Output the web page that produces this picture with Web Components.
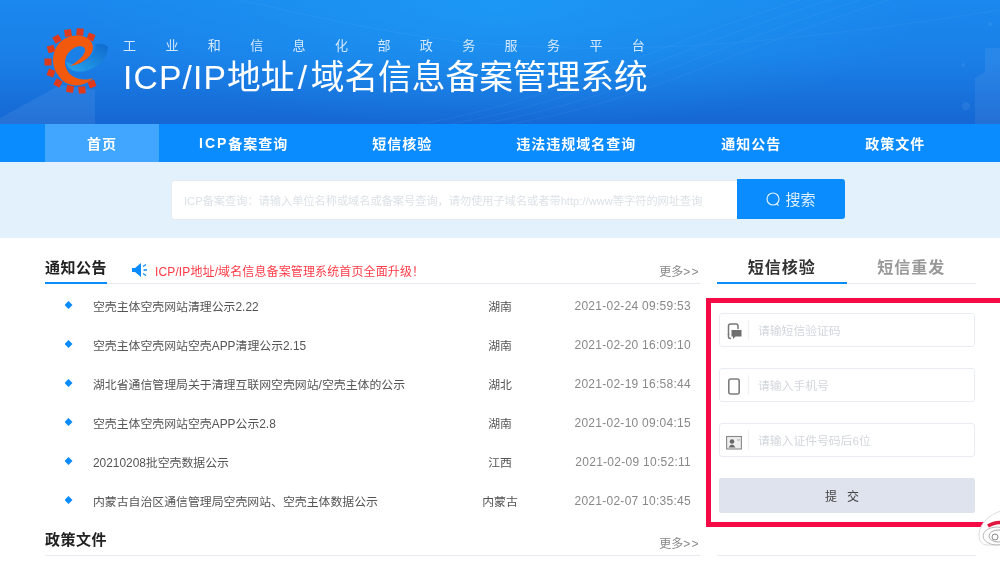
<!DOCTYPE html>
<html lang="zh-CN"><head><meta charset="utf-8"><title>ICP/IP地址/域名信息备案管理系统</title>
<style>
html,body{margin:0;padding:0;background:#fff;overflow:hidden}
body{width:1000px;height:562px;font-family:"Liberation Sans","Noto Sans CJK SC",sans-serif;position:relative;filter:blur(.3px)}
main-columns{margin-top:17px}
.ls2{letter-spacing:2px}
</style></head><body>
<site-header></site-header>
<site-nav><nav-item active>首页</nav-item><nav-item style="padding-left:40px"><span class="ls2">ICP</span>备案查询</nav-item><nav-item>短信核验</nav-item><nav-item style="padding-right:43px">违法违规域名查询</nav-item><nav-item>通知公告</nav-item><nav-item>政策文件</nav-item></site-nav>
<search-band></search-band>
<main-columns>
  <div slot="left">
    <section-head title="通知公告"></section-head>
    <notice-list>
      <notice-row t="空壳主体空壳网站清理公示2.22" p="湖南" d="2021-02-24 09:59:53"></notice-row>
      <notice-row t="空壳主体空壳网站空壳APP清理公示2.15" p="湖南" d="2021-02-20 16:09:10"></notice-row>
      <notice-row t="湖北省通信管理局关于清理互联网空壳网站/空壳主体的公示" p="湖北" d="2021-02-19 16:58:44"></notice-row>
      <notice-row t="空壳主体空壳网站空壳APP公示2.8" p="湖南" d="2021-02-10 09:04:15"></notice-row>
      <notice-row t="20210208批空壳数据公示" p="江西" d="2021-02-09 10:52:11"></notice-row>
      <notice-row t="内蒙古自治区通信管理局空壳网站、空壳主体数据公示" p="内蒙古" d="2021-02-07 10:35:45"></notice-row>
    </notice-list>
    <section-head title="政策文件" plain></section-head>
  </div>
  <sms-panel slot="right"></sms-panel>
</main-columns>
<weibo-badge></weibo-badge>
<script>
const def=(name,html)=>customElements.define(name,class extends HTMLElement{
  constructor(){super();this.attachShadow({mode:'open'});if(typeof html!=='function')this.shadowRoot.innerHTML=html}
  connectedCallback(){if(typeof html==='function')this.shadowRoot.innerHTML=html(this)}
});
const squares=[[68,33,-8],[80,32,5],[91,37,20],[57,39,-30],[51,49,-15],[48,62,0],[51,73,20],[58,83,30],[70,89,10],[82,90,-5],[92,84,-20]]
 .map(([x,y,r])=>`<rect x="${x-3.5}" y="${y-3.5}" width="7" height="7" fill="#e03a1c" transform="rotate(${r} ${x} ${y})"/>`).join('');
def('site-header',`<style>
:host{display:block;height:124px;position:relative;overflow:hidden;color:#fff;
 background:radial-gradient(ellipse 420px 120px at 500px 10px,rgba(30,165,250,.55),rgba(30,165,250,0)),linear-gradient(180deg,#1a88ee 0%,#1a80e8 45%,#1667d3 100%)}
.bg{position:absolute;left:0;top:0}
.row{position:relative;display:flex;align-items:flex-start;padding:25px 0 0 40px}
.logo{display:block;width:70px;height:70px;flex:none}
.txt{margin-left:13px;padding-top:12px}
.sub{font-size:13px;line-height:18px;letter-spacing:29.4px;white-space:nowrap;color:#d5e8fb}
.ttl{font-size:33.7px;line-height:42px;margin-top:1px;white-space:nowrap;color:#fff}
.ttl b{font-weight:400;letter-spacing:1.1px}
.ttl u{text-decoration:none;padding:0 3.5px}
</style>
<svg class="bg" width="1000" height="124" viewBox="0 0 1000 124" fill="none">
<path d="M0 124 L0 118 L60 85 L95 90 L95 124Z" fill="#fff" opacity=".07"/>
<g stroke="#fff" opacity=".04"><path d="M240 0C420 40 560 80 1000 10"/><path d="M420 124C560 100 640 50 800 0"/><path d="M450 124C590 100 670 50 830 0"/><path d="M480 124C620 100 700 50 860 0"/><path d="M510 124C650 100 730 50 890 0"/></g>
<g fill="#fff" opacity=".06"><path d="M975 78L985 72V48H1000V124H975Z"/><circle cx="966" cy="106" r="4"/><circle cx="963" cy="65" r="2"/><circle cx="990" cy="24" r="2"/></g>
</svg>
<div class="row">
<svg class="logo" viewBox="40 25 70 70" aria-hidden="true">
<defs><linearGradient id="b" x1="0" y1="1" x2="1" y2="0"><stop offset="0" stop-color="#27a6ee"/><stop offset="1" stop-color="#0f69cc"/></linearGradient></defs>
${squares}
<path d="M66 61C67 72 80 74 91 69C101 65 108 57 108 47C106 44 100 43 95 44C97 52 90 60 82 63C76 65 70 65 66 61Z" fill="url(#b)"/>
<path d="M93 78C85 87 70 88 62 80C53 71 51 60 55 50C60 38 72 34 82 36C91 38 96 46 91 54C86 61 78 65 70 66C77 62 84 56 85 51C86 46 79 45 74 48C67 52 63 60 66 68C70 78 82 82 93 78Z" fill="#f2590c"/>
</svg>
<div class="txt"><div class="sub">工业和信息化部政务服务平台</div><div class="ttl"><b>ICP/IP</b>地址<u>/</u>域名信息备案管理系统</div></div>
</div>`);
def('site-nav',`<style>:host{display:flex;height:38px;background:#0a8bfe;padding-left:45px}</style><slot></slot>`);
def('nav-item',`<style>:host{display:flex;align-items:center;padding:0 42px;color:#fff;font-size:14px;font-weight:700;letter-spacing:1px;white-space:nowrap}
:host([active]){background:#40a6ff}</style><slot></slot>`);
def('search-band',`<style>:host{display:flex;height:76px;background:#e3f1fd;padding:17px 0 0 171px;box-sizing:border-box}
.in{width:566px;height:40px;box-sizing:border-box;background:#fff;border:1px solid #e6ebf1;border-right:0;border-radius:3px 0 0 3px;margin-top:1px;padding-left:12px;display:flex;align-items:center;font-size:11.2px;color:#dde1e7;white-space:nowrap;overflow:hidden}
.btn{width:108px;height:40px;background:#0a8bfe;border-radius:0 3px 3px 0;color:#dcefff;display:flex;align-items:center;justify-content:center;gap:4px;font-size:15px;padding-right:1px;box-sizing:border-box}
svg{display:block}
span{margin-top:-1px}
</style><div class="in">ICP备案查询：请输入单位名称或域名或备案号查询，请勿使用子域名或者带http://www等字符的网址查询</div>
<div class="btn"><svg width="16" height="16" viewBox="0 0 16 16" fill="none" stroke="#dcefff" stroke-width="1.2"><circle cx="8" cy="8" r="6"/><path d="M11.5 12.5L13.5 14.5"/></svg><span>搜索</span></div>`);
def('main-columns',`<style>:host{display:block}
.w{display:flex;padding-left:45px}
.l{width:655px;flex:none}.r{margin-left:17px;width:259px;flex:none}
</style><div class="w"><div class="l"><slot name="left"></slot></div><div class="r"><slot name="right"></slot></div></div>`);
def('section-head',h=>`<style>:host{display:flex;align-items:flex-end;height:28px;border-bottom:1px solid #e7eaee;position:relative}
.t{font-size:15px;font-weight:700;letter-spacing:.5px;color:#222;height:28px;line-height:23px;box-sizing:border-box;border-bottom:2px solid #0a8bfe;margin-bottom:-1px;white-space:nowrap}
:host([plain]) .t{border-bottom:0;margin-bottom:0;line-height:25px}
.n{display:flex;align-items:center;height:30px;margin-left:25px;color:#ff3b47;font-size:12px;letter-spacing:.12px;white-space:nowrap;gap:7px;align-self:flex-start}
.m{margin-left:auto;font-size:12px;color:#888;white-space:nowrap;align-self:flex-start;line-height:34px}
.m i{font-style:normal;letter-spacing:1.4px}
:host([plain]) .m{line-height:34px}
svg{display:block}
</style><div class="t">${h.getAttribute('title')}</div>
${h.hasAttribute('plain')?'':`<div class="n"><svg width="16" height="14" viewBox="0 0 16 14" fill="#0a8bfe"><path d="M0 5H3L9 0V14L3 9H0Z"/><path d="M11 3.5L14 1.5M11.5 7H15M11 10.5L14 12.5" stroke="#0a8bfe" stroke-width="1.3"/></svg><span>ICP/IP地址/域名信息备案管理系统首页全面升级！</span></div>`}
<div class="m">更多<i>&gt;&gt;</i></div>`);
def('notice-list',`<style>:host{display:block;padding:2px 0 7px}</style><slot></slot>`);
def('notice-row',h=>`<style>:host{display:flex;align-items:center;height:39px;font-size:11.88px;color:#555;white-space:nowrap}
.b{width:8px;height:8px;margin:-1px 17.5px 0 19.5px;flex:none;background:#0a8bfe;clip-path:polygon(50% 0,100% 50%,50% 100%,0 50%)}
.t{width:382px;margin-left:3px;flex:none;overflow:hidden}
.p{width:50px;text-align:center;flex:none}
.d{margin-left:auto;color:#888;font-size:12px;letter-spacing:.27px;padding-right:9px}
</style><i class="b"></i><div class="t">${h.getAttribute('t')}</div><div class="p">${h.getAttribute('p')}</div><div class="d">${h.getAttribute('d')}</div>`);
def('sms-panel',`<style>:host{display:block}
.tabs{display:flex;height:28px;border-bottom:1px solid #e7eaee}
.tab{width:130px;text-align:center;font-size:16px;font-weight:700;letter-spacing:1px;line-height:25px;color:#999;box-sizing:border-box;height:29px}
.tab.on{color:#333;border-bottom:2px solid #0a8bfe}
.box{margin:14px 0 0 -11.5px;width:300px;height:228.5px;box-sizing:border-box;border:5px solid #f50a45;padding:10px 0 0 8.5px}
.sub{margin-top:21px;width:256px;height:35px;background:#dfe3ee;border-radius:2px;display:flex;align-items:center;justify-content:center;font-size:12px;color:#444;letter-spacing:10px;box-sizing:border-box}
sms-field{margin-bottom:21px}sms-field:nth-of-type(3){margin-bottom:0}
.rule{margin-top:28px;border-bottom:1px solid #e7eaee}
</style>
<div class="tabs"><div class="tab on">短信核验</div><div class="tab">短信重发</div></div>
<div class="box">
<sms-field ph="请输短信验证码" icon="sms"></sms-field>
<sms-field ph="请输入手机号" icon="phone"></sms-field>
<sms-field ph="请输入证件号码后6位" icon="id"></sms-field>
<div class="sub">提交</div>
</div><div class="rule"></div>`);
const icons={
 sms:`<path d="M2.500 12V3Q2.500 1 4.500 1H10Q12 1 12 3V6" fill="none" stroke="#777" stroke-width="1.500"/><path d="M2.500 11V14Q2.500 15.500 5 15.500" fill="none" stroke="#777" stroke-width="1.500"/><path d="M5.500 7H15.500V13.500H9.500L7 16V13.500H5.500Z" fill="#6f6f6f"/>`,
 phone:`<rect x="2.800" y="1" width="10.400" height="15" rx="2" fill="none" stroke="#7d7d7d" stroke-width="1.600"/>`,
 id:`<rect x=".6" y="1.500" width="14.800" height="12.500" fill="#eee" stroke="#888" stroke-width="1.100"/><circle cx="6" cy="6.500" r="2.300" fill="#666"/><path d="M2.500 12.500Q6 6.500 9.500 12.500Z" fill="#666"/><path d="M11 5H14" stroke="#aaa"/>`};
const nudge={sms:3,phone:3,id:6};
def('sms-field',h=>`<style>:host{display:flex;align-items:center;width:256px;height:34px;box-sizing:border-box;border:1px solid #e9edf3;border-radius:3px;background:#fff}
svg{display:block;margin:${nudge[h.getAttribute('icon')]}px 0 0 6px;flex:none}
.s{width:1px;height:20px;background:#eef0f3;margin:0 9px 0 6px;flex:none}
span{font-size:11.8px;color:#d3d6dc;white-space:nowrap;margin-top:-2px}
</style><svg width="16" height="17" viewBox="0 0 16 17">${icons[h.getAttribute('icon')]}</svg><i class="s"></i><span>${h.getAttribute('ph')}</span>`);
def('weibo-badge',`<style>:host{position:absolute;left:977px;top:509px;width:23px;height:40px;overflow:hidden;display:block}svg{display:block}</style>
<svg width="40" height="40" viewBox="0 0 40 40" fill="none"><path d="M2 26C2 14 16 1 32 1H40V36H10C5 36 2 32 2 26Z" fill="#fff" stroke="#dcdcdc"/><path d="M11 17C17 13 24 13 30 14" stroke="#e0173f" stroke-width="3.500"/><ellipse cx="20" cy="27" rx="14" ry="9" stroke="#bbb"/><ellipse cx="21" cy="27" rx="9" ry="6" stroke="#aaa"/><circle cx="18" cy="28" r="3" stroke="#888"/></svg>`);
</script>
</body></html>
